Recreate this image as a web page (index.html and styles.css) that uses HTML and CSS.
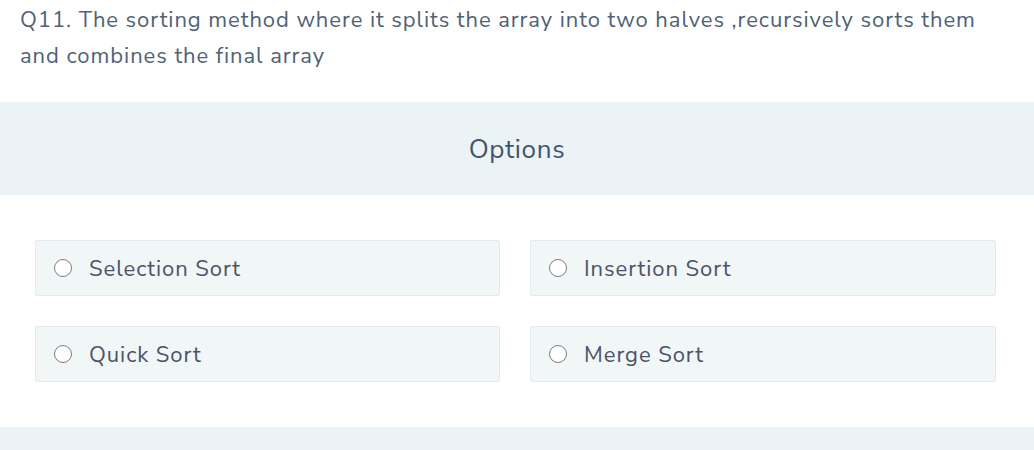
FILE: index.html
```html
<!DOCTYPE html>
<html>
<head>
<meta charset="utf-8">
<link rel="stylesheet" href="styles.css">
</head>
<body>
<div class="question">Q11. The sorting method where it splits the array into two halves ,recursively sorts them and combines the final array</div>
<div class="options-head">Options</div>
<div class="options">
  <label class="opt"><span class="radio"></span><span class="label">Selection Sort</span></label>
  <label class="opt"><span class="radio"></span><span class="label">Insertion Sort</span></label>
  <label class="opt"><span class="radio"></span><span class="label">Quick Sort</span></label>
  <label class="opt"><span class="radio"></span><span class="label">Merge Sort</span></label>
</div>
<div class="footer-band"></div>
</body>
</html>
```
FILE: styles.css
```css
html, body {
  margin: 0;
  padding: 0;
  background: #ffffff;
}
body {
  font-family: "Nunito Sans", "Open Sans", "Noto Sans", sans-serif;
  width: 1034px;
  height: 450px;
  overflow: hidden;
}
.question {
  padding: 1px 40px 0 20px;
  margin-top: 1px;
  font-size: 22px;
  letter-spacing: 0.95px;
  line-height: 36px;
  color: #4f6276;
  height: 101px;
  box-sizing: border-box;
}
.options-head {
  background: #ecf3f7;
  height: 93px;
  display: flex;
  align-items: center;
  justify-content: center;
  font-size: 26px;
  letter-spacing: 0.7px;
  color: #3f556b;
  padding-top: 1px;
  box-sizing: border-box;
}
.options {
  display: grid;
  grid-template-columns: 465px 466px;
  column-gap: 30px;
  row-gap: 30px;
  padding: 45px 0 45px 35px;
}
.opt {
  display: flex;
  align-items: center;
  height: 56px;
  box-sizing: border-box;
  background: #f1f6f7;
  border: 1px solid #e3eaed;
  border-radius: 2px;
  padding-left: 18px;
}
.radio {
  flex-shrink: 0;
  width: 18px;
  height: 18px;
  box-sizing: border-box;
  border: 1.5px solid #7d7d7d;
  border-radius: 50%;
  background: #ffffff;
  margin-right: 17px;
}
.label {
  font-size: 22px;
  letter-spacing: 0.95px;
  color: #4c5268;
  padding-top: 2px;
}
.footer-band {
  background: #ecf3f7;
  height: 30px;
}
```
